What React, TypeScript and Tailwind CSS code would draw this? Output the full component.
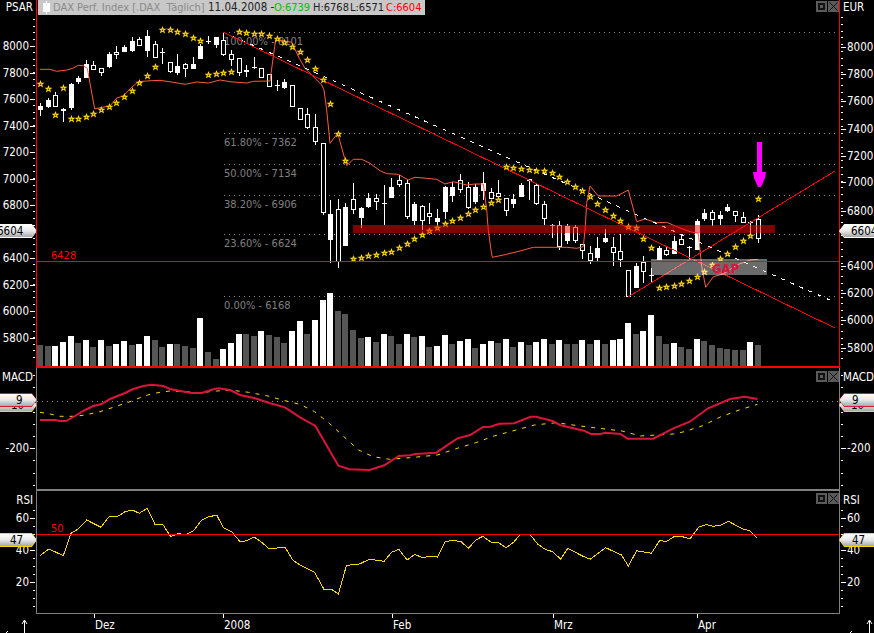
import React from "react";

const FONT = "font-['DejaVu_Sans_Condensed','Liberation_Sans',sans-serif]";
const X = (k: number) => Math.round(40 + k * 7.636);

const C: [number, number, number, number, number][] = [
  [310,350,318,330,1],[295,325,300,322,1],[275,318,286,318,0],[325,368,326,332,1],[250,330,252,323,1],[228,252,234,246,1],
  [180,235,192,234,1],[183,210,196,206,0],[205,228,205,217,0],[157,205,163,201,1],[138,177,156,163,0],[135,157,141,156,1],
  [112,157,124,152,1],[112,140,118,136,0],[90,170,108,152,1],[123,172,133,170,0],[145,192,157,160,1],[186,218,187,212,0],
  [162,225,198,218,1],[190,232,193,205,0],[171,206,192,206,1],[132,177,138,177,1],[108,132,124,126,1],[110,142,110,136,1],
  [100,170,120,162,0],[150,198,162,178,0],[175,230,175,217,0],[195,230,211,217,1],[171,208,201,204,1],[204,232,205,231,0],
  [222,262,222,258,0],[240,272,254,257,1],[237,268,247,265,1],[255,320,256,317,0],[325,358,325,357,0],[325,387,343,380,0],
  [343,435,380,423,0],[430,645,430,637,0],[600,788,642,720,1],[597,804,628,783,0],[610,738,621,738,1],[550,642,598,627,0],
  [621,684,624,654,1],[579,624,594,621,1],[582,630,595,602,0],[555,675,609,612,1],[534,594,561,594,1],[525,561,540,552,0],
  [540,657,550,647,0],[606,675,612,663,1],[615,690,619,660,0],[609,672,639,647,0],[627,675,654,666,1],[558,657,561,636,1],
  [546,606,561,588,1],[522,579,541,567,0],[546,627,561,621,0],[552,612,561,606,1],[516,600,550,573,1],[564,597,577,594,0],
  [540,591,580,589,0],[594,648,594,630,0],[582,624,597,612,1],[550,591,555,591,1],[540,600,537,543,1],[552,615,555,609,0],
  [603,675,612,654,0],[672,714,675,678,1],[663,750,675,738,0],[672,732,678,723,1],[675,729,681,720,0],[732,777,732,750,0],
  [738,792,759,780,0],[711,783,744,774,1],[687,729,714,726,1],[711,798,741,756,0],[702,801,753,777,0],[810,888,810,888,0],
  [789,864,798,864,1],[768,849,786,813,0],[804,846,825,828,1],[738,780,744,780,1],[738,768,750,762,0],[708,762,723,762,1],
  [705,735,717,732,0],[738,780,741,743,1],[657,750,663,750,1],[627,663,639,657,1],[630,678,636,657,0],[633,675,645,657,1],
  [612,636,621,633,1],[633,666,633,645,0],[636,669,651,666,0],[663,705,666,669,1],[645,729,657,714,0],
];

const STARS = [252,267,345,264,357,357,351,342,330,321,309,291,273,249,228,201,90,90,96,102,114,123,225,222,219,216,96,99,102,102,108,117,128,141,156,180,207,240,312,402,483,777,774,768,765,759,756,744,732,717,705,693,684,672,663,654,642,630,621,609,600,501,504,507,510,513,513,519,531,546,561,573,590,612,630,648,663,681,684,717,744,864,861,858,852,843,831,816,795,777,762,741,723,708,597];

const VOL: [number, number][] = [
  [525,0],[528,0],[528,1],[516,1],[498,1],[519,0],[510,1],[531,0],[510,1],[528,0],[522,1],[513,1],[525,0],[522,1],[498,1],[510,0],[531,0],[522,1],[522,0],[528,0],[534,0],[444,1],[546,0],[567,0],[537,1],[519,1],[492,1],[492,0],[498,0],[483,1],[495,0],[501,0],[519,0],[483,1],[453,1],
  [492,0],[450,1],[390,1],[369,1],[423,0],[432,0],[480,0],[504,0],[501,1],[516,0],[492,1],[498,0],[522,0],[492,1],[501,0],[498,1],[531,0],[528,1],[495,1],[522,0],[513,1],[507,1],[534,0],[522,1],[513,1],[519,0],[507,1],[531,0],[516,1],[525,0],[516,1],[507,1],[522,0],[510,1],[522,0],[522,0],[510,1],
  [522,0],[510,1],[522,0],[510,1],[507,1],[459,1],[492,0],[483,1],[435,1],[498,0],[522,0],[519,1],[531,0],[537,0],[507,1],[513,0],[525,0],[534,0],[537,0],[540,0],[540,0],[516,1],[525,0],
];

const BAND: [number, number][] = [
  [120,208],[150,208],[170,214],[200,210],[218,205],[235,196],[250,197],[262,205],[270,250],[284,327],[300,323],[330,318],[350,294],[370,288],[395,262],[415,245],[440,243],[480,241],[520,247],[555,253],[590,246],[625,249],[660,240],[690,245],[740,249],[760,244],[810,243],[820,170],[827,118],[875,127],[898,175],
  [915,205],[965,255],[972,270],[980,330],[990,430],[1013,400],[1040,497],[1060,478],[1085,478],[1110,490],[1140,512],[1160,521],[1195,523],[1225,540],[1245,532],[1280,535],[1310,538],[1335,552],[1360,545],[1400,555],[1425,552],[1450,552],[1455,590],[1460,630],[1465,690],[1473,750],[1477,772],[1520,763],[1560,753],[1600,742],[1660,742],[1700,742],[1730,745],[1750,740],[1755,690],[1760,610],[1770,558],
  [1795,588],[1850,588],[1885,570],[1910,665],[1935,657],[1970,668],[2000,667],[2030,680],[2070,695],[2095,700],[2105,800],[2117,862],[2140,830],[2170,822],[2210,795],[2250,780],[2275,778],
];

const z7 = (p: [number, number][]) => p.map(([x, y]) => [x / 3, 360 + y / 3]);
const z8 = (p: [number, number][]) => p.map(([x, y]) => [300 + x / 2.732, 360 + y / 3]);
const z9 = (p: [number, number][]) => p.map(([x, y]) => [x / 3, 485 + y / 3]);
const z10 = (p: [number, number][]) => p.map(([x, y]) => [300 + x / 2.732, 485 + y / 3]);
const pts = (p: number[][]) => p.map(([x, y]) => `${x.toFixed(1)},${y.toFixed(1)}`).join(" ");

const MACD = [
  ...z7([[120,180],[165,180],[180,183],[198,183],[225,168],[255,150],[280,138],[305,132],[330,117],[375,99],[400,87],[430,78],[455,74],[490,78],[510,87],[540,93],[575,99],[605,99],[640,88],[655,85],[690,90],[720,105],[765,115],[810,130],[855,142],[900,172]]),
  ...z8([[42,198],[105,317],[135,328],[190,330],[230,316],[270,288],[300,286],[315,282],[372,278],[430,235],[465,225],[500,201],[520,200],[545,191],[585,190],[630,170],[645,170],[690,183],[710,195],[775,212],[795,222],[820,222],[835,218],[875,222],[895,236],[965,236],[1020,205],[1065,185],[1115,145],[1175,117],[1215,110],[1250,117]]),
];
const SIGNAL = [
  ...z7([[120,157],[150,162],[180,169],[225,169],[255,165],[300,155],[345,140],[390,125],[420,113],[450,103],[480,97],[510,93],[560,95],[600,98],[650,93],[690,90],[745,97],[800,107],[855,122],[900,133]]),
  ...z8([[40,155],[80,190],[120,230],[160,270],[200,290],[245,298],[300,293],[375,285],[430,265],[480,248],[530,228],[590,210],[640,195],[700,188],[780,200],[880,213],[930,228],[1020,222],[1050,215],[1100,197],[1150,170],[1200,150],[1250,133]]),
];
const RSI = [
  ...z9([[120,212],[147,192],[190,212],[213,145],[235,132],[260,105],[303,127],[328,94],[355,93],[375,80],[397,75],[418,85],[442,70],[466,120],[488,118],[512,155],[535,145],[555,150],[580,138],[605,105],[625,96],[650,90],[670,128],[695,140],[720,170],[740,167],[762,156],[785,172],[808,192],[855,186],[878,225],[900,240]]),
  ...z10([[40,262],[65,312],[85,312],[105,327],[127,241],[160,238],[190,223],[230,229],[250,202],[270,193],[293,225],[313,208],[335,218],[355,214],[375,216],[397,170],[420,166],[440,170],[460,190],[480,165],[500,154],[522,172],[542,173],[563,188],[585,170],[602,148],[628,148],[650,178],[670,193],[690,200],[712,222],[732,190],[770,212],[793,223],[835,188],[878,210],[897,243],[920,197],[960,205],[983,166],[1000,170],[1022,155],[1045,155],[1065,162],[1090,126],[1110,119],[1130,124],[1150,120],[1170,109],[1210,132],[1230,138],[1250,160]]),
];

type Lab = [string, number];

function Axis({ side, top, h, title, labels, minorFrom, minorStep, minorTo, titleY }: {
  side: "l" | "r"; top: number; h: number; title: string; labels: Lab[]; minorFrom: number; minorStep: number; minorTo: number; titleY: number;
}) {
  const minors: number[] = [];
  for (let y = minorFrom; y <= minorTo; y += minorStep) minors.push(Math.round(y));
  const W = side === "l" ? 36 : 34;
  return (
    <svg width={W} height={h} viewBox={`0 ${top} ${W} ${h}`} className={`block shrink-0 ${FONT}`}>
      {minors.map((y) => (
        <rect key={y} x={side === "l" ? 33 : 1} y={y} width={2} height={1} className="fill-white" shapeRendering="crispEdges" />
      ))}
      {labels.map(([t, y]) => (
        <g key={t}>
          <rect x={side === "l" ? 30 : 1} y={Math.round(y)} width={5} height={1} className="fill-white" shapeRendering="crispEdges" />
          <text x={side === "l" ? 29 : 7} y={y + 4} textAnchor={side === "l" ? "end" : "start"} className="fill-white text-[11.5px]">{t}</text>
        </g>
      ))}
      <text x={side === "l" ? 33 : 3} y={titleY + 4} textAnchor={side === "l" ? "end" : "start"} className="fill-white text-[11.5px]">{title}</text>
    </svg>
  );
}

function Tag({ side, top, text, tone, textX }: { side: "l" | "r"; top: number; text: string; tone: string; textX: string }) {
  const clip = side === "l"
    ? "[clip-path:polygon(0_0,86%_0,100%_50%,86%_100%,0_100%)]"
    : "[clip-path:polygon(14%_0,100%_0,100%_100%,14%_100%,0_50%)]";
  return (
    <div className={`absolute h-[14px] w-[37px] ${side === "l" ? "left-0" : "-left-[1px]"} ${clip} ${tone}`} style={{ top }}>
      <div className={`absolute inset-y-[1px] inset-x-0 ${clip} bg-gradient-to-b from-white via-[#e8e8e8] to-[#a8a8a8]`}>
        <span className={`absolute top-[-2px] ${textX} text-[11.5px] text-black whitespace-nowrap ${FONT}`}>{text}</span>
      </div>
    </div>
  );
}

function Buttons() {
  return (
    <div className="absolute right-0 flex gap-[1px] top-0">
      <div className="w-[11px] h-[11px] bg-[#5a5a5a] flex items-center justify-center">
        <div className="w-[7px] h-[7px] border-2 border-[#111]" />
      </div>
      <div className="w-[11px] h-[11px] bg-[#5a5a5a] flex items-center justify-center">
        <svg width="9" height="9" viewBox="0 0 9 9"><path d="M0.5 0.5L8.5 8.5M8.5 0.5L0.5 8.5" className="stroke-[#111]" fill="none" /></svg>
      </div>
    </div>
  );
}

const FIB: [number, string, number][] = [
  [32, "100.00% - 8101", 41], [133, "61.80% - 7362", 142], [164, "50.00% - 7134", 173],
  [195, "38.20% - 6906", 204], [234, "23.60% - 6624", 243], [296, "0.00% - 6168", 305],
];

function MainPlot() {
  return (
    <svg width={802} height={366} viewBox="37 0 802 366" className={`block ${FONT}`}>
      {FIB.map(([y]) => (
        <line key={y} x1={224} x2={839} y1={y + 0.5} y2={y + 0.5} className="stroke-[#8a8a8a]" strokeDasharray="1 4" shapeRendering="crispEdges" />
      ))}
      {FIB.map(([y, t, ty]) => (
        <text key={t} x={224} y={ty + 4} className="fill-[#808080] text-[11px]">{t}</text>
      ))}
      <text x={51} y={259} className="fill-[#ff0000] text-[11px]">6428</text>
      {VOL.map(([t, w], k) => {
        const top = Math.round(170 + t / 3);
        return <rect key={k} x={X(k) - 3} y={top} width={6} height={366 - top} className={w ? "fill-white" : "fill-[#555555]"} shapeRendering="crispEdges" />;
      })}
      {C.map(([h, l, a, b, f], k) => {
        const x = X(k);
        const t = Math.round(a / 3), bt = Math.max(Math.round(b / 3), t + 1);
        return (
          <g key={k} shapeRendering="crispEdges">
            <rect x={x} y={Math.round(h / 3)} width={1} height={Math.max(Math.round((l - h) / 3), 1)} className="fill-white" />
            {f ? (
              <rect x={x - 2} y={t} width={5} height={bt - t} className="fill-white" />
            ) : (
              <rect x={x - 2 + 0.5} y={t + 0.5} width={4} height={bt - t} className="fill-black stroke-white" />
            )}
          </g>
        );
      })}
      <polyline points={pts(BAND.map(([x, y]) => [x / 3, y / 3]))} fill="none" className="stroke-[#ff5a3c]" strokeWidth={1} />
      <line x1={223} y1={32} x2={832} y2={301} className="stroke-white" strokeDasharray="4 6" shapeRendering="crispEdges" />
      <line x1={223} y1={32} x2={835} y2={328} className="stroke-[#ff0000]" shapeRendering="crispEdges" />
      <line x1={628} y1={297} x2={835} y2={171} className="stroke-[#ff0000]" shapeRendering="crispEdges" />
      {STARS.map((y, k) => {
        const cx = X(k) + 0.5, cy = y / 3;
        return (
          <g key={k} transform={`translate(${cx} ${cy})`}>
            <path d="M0-4L1.1-1.2 4-1.2 1.7 .6 2.6 3.5 0 1.8-2.6 3.5-1.7 .6-4-1.2-1.1-1.2Z" className="fill-[#ffd700]" />
            <circle r={0.8} cy={0.2} className="fill-[#3a3000]" />
          </g>
        );
      })}
      <rect x={353} y={225} width={422} height={8} className="fill-[#ff0000]" fillOpacity={0.5} shapeRendering="crispEdges" />
      <rect x={651} y={259} width={116} height={16} className="fill-white" fillOpacity={0.42} shapeRendering="crispEdges" />
      <text x={712} y={273} className="fill-[#dc143c] text-[13px] font-bold">GAP</text>
      <rect x={37} y={261} width={802} height={1} className="fill-[#ff0000]" shapeRendering="crispEdges" />
      <path d="M757 142H762V172H766L765 178 761 187H758L754 178 753 172H757Z" className="fill-[#ff00ff]" />
    </svg>
  );
}

function MacdPlot() {
  return (
    <svg width={802} height={121} viewBox="37 368 802 121" className="block">
      <line x1={37} x2={839} y1={401.5} y2={401.5} className="stroke-[#8a8a8a]" strokeDasharray="1 4" shapeRendering="crispEdges" />
      <polyline points={pts(SIGNAL)} fill="none" className="stroke-[#ffd700]" strokeDasharray="4 6" />
      <polyline points={pts(MACD)} fill="none" className="stroke-[#dc143c]" strokeWidth={2} />
    </svg>
  );
}

function RsiPlot() {
  return (
    <svg width={802} height={122} viewBox="37 491 802 122" className={`block ${FONT}`}>
      <text x={51} y={532} className="fill-[#ff0000] text-[11px]">50</text>
      <polyline points={pts(RSI)} fill="none" className="stroke-[#ffd700]" shapeRendering="crispEdges" />
      <rect x={37} y={534} width={802} height={1} className="fill-[#ff0000]" shapeRendering="crispEdges" />
    </svg>
  );
}

const MAIN_L: Lab[] = [["8000",46],["7800",73],["7600",99],["7400",126],["7200",152],["7000",179],["6800",205],["6400",258],["6200",284.5],["6000",311],["5800",337.5]];
const MAIN_R: Lab[] = [["8000",47],["7800",74],["7600",101],["7400",129],["7200",156],["7000",182],["6800",211],["6400",266],["6200",293],["6000",320],["5800",348]];

export default function App() {
  return (
    <div className={`relative w-[874px] h-[633px] bg-black overflow-hidden flex flex-col ${FONT}`}>
      <div className="flex h-[368px]">
        <div className="relative w-9 shrink-0">
          <Axis side="l" top={0} h={368} title="PSAR" titleY={7} labels={MAIN_L} minorFrom={19} minorStep={6.63} minorTo={362} />
          <Tag side="l" top={224} text="6604" tone="bg-white" textX="left-[-3px]" />
        </div>
        <div className="relative flex-1 border-x border-b-2 border-x-[#ff0000] border-b-[#ff0000]">
          <MainPlot />
          <div className="absolute left-[1px] top-0 h-[15px] w-[387px] bg-[#c8c8c8] flex items-center pl-[5px] whitespace-pre leading-none">
            <svg width="7" height="13" viewBox="0 0 7 13" className="shrink-0 mr-[3px]"><path d="M3 0h1v2h3v9H4v2H3v-2H0V2h3z" className="fill-white" /></svg>
            <span className="text-[11px] text-[#8a8a8a] w-[155px] shrink-0">DAX Perf. Index [.DAX  Täglich]</span>
            <span className="text-[11.5px] text-[#222] w-[66px] shrink-0">11.04.2008 -</span>
            <span className="text-[11px] text-[#00c000] w-[39px] shrink-0">O:6739</span>
            <span className="text-[11px] text-[#222] w-[37px] shrink-0">H:6768</span>
            <span className="text-[11px] text-[#222] w-[36px] shrink-0">L:6571</span>
            <span className="text-[11px] text-[#ff0000]">C:6604</span>
          </div>
          <div className="absolute right-0 top-[1px] w-[23px] h-[11px]"><Buttons /></div>
        </div>
        <div className="relative w-[34px] shrink-0">
          <Axis side="r" top={0} h={368} title="EUR" titleY={7} labels={MAIN_R} minorFrom={17} minorStep={6.82} minorTo={362} />
          <Tag side="r" top={224} text="6604" tone="bg-white" textX="left-[12px]" />
        </div>
      </div>

      <div className="flex h-[123px]">
        <div className="relative w-9 shrink-0">
          <Axis side="l" top={368} h={123} title="MACD" titleY={377} labels={[["-200",448]]} minorFrom={375} minorStep={12.2} minorTo={485} />
          <Tag side="l" top={30} text="10" tone="bg-[#ffd700]" textX="left-[11px]" />
          <Tag side="l" top={25} text="9" tone="bg-[#dc143c]" textX="left-[16px]" />
        </div>
        <div className="relative flex-1 border-x border-b-2 border-x-[#808080] border-b-[#808080]">
          <MacdPlot />
          <div className="absolute right-0 top-[3px] w-[23px] h-[11px]"><Buttons /></div>
        </div>
        <div className="relative w-[34px] shrink-0">
          <Axis side="r" top={368} h={123} title="MACD" titleY={377} labels={[["-200",448]]} minorFrom={375} minorStep={12.2} minorTo={485} />
          <Tag side="r" top={30} text="10" tone="bg-[#ffd700]" textX="left-[12px]" />
          <Tag side="r" top={25} text="9" tone="bg-[#dc143c]" textX="left-[13px]" />
        </div>
      </div>

      <div className="flex h-[123px]">
        <div className="relative w-9 shrink-0">
          <Axis side="l" top={491} h={123} title="RSI" titleY={500} labels={[["60",518],["40",550],["20",582]]} minorFrom={510} minorStep={8} minorTo={606} />
          <Tag side="l" top={42} text="47" tone="bg-[#ffd700]" textX="left-[10px]" />
        </div>
        <div className="relative flex-1 border-x border-b border-[#808080]">
          <RsiPlot />
          <div className="absolute right-0 top-[2px] w-[23px] h-[11px]"><Buttons /></div>
        </div>
        <div className="relative w-[34px] shrink-0">
          <Axis side="r" top={491} h={123} title="RSI" titleY={500} labels={[["60",518],["40",550],["20",582]]} minorFrom={510} minorStep={8} minorTo={606} />
          <Tag side="r" top={42} text="47" tone="bg-[#ffd700]" textX="left-[13px]" />
        </div>
      </div>

      <svg width={874} height={19} viewBox="0 614 874 19" className={`block ${FONT}`}>
        {([["Dez",94],["2008",223],["Feb",392],["Mrz",553],["Apr",697]] as [string, number][]).map(([t, x]) => (
          <g key={t}>
            <rect x={x} y={614} width={1} height={4} className="fill-white" />
            <text x={x + 1} y={629} className="fill-white text-[11.5px]">{t}</text>
          </g>
        ))}
        <path d="M24.5 633V621M22 624L24.5 620 27 624" fill="none" className="stroke-white" />
        <path d="M869.5 633V621M867 624L869.5 620 872 624" fill="none" className="stroke-white" />
        <path d="M6 633L8 631M850 633L852 631" className="stroke-white" />
      </svg>
    </div>
  );
}
